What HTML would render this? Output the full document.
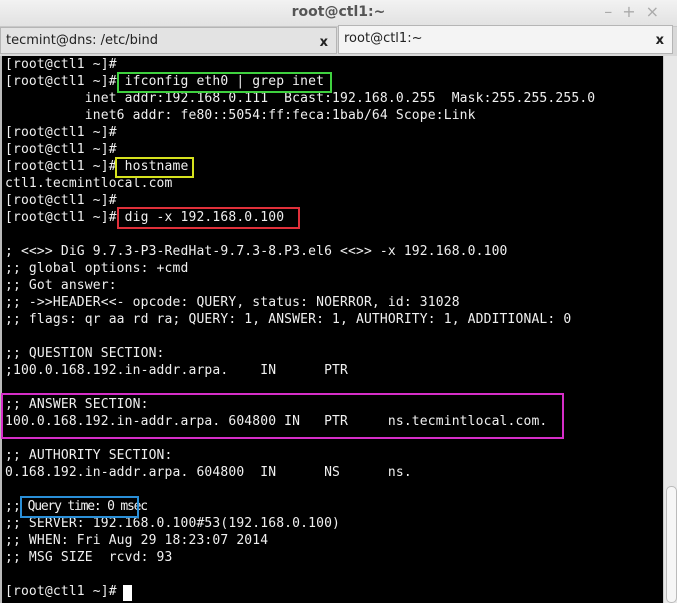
<!DOCTYPE html>
<html><head><style>
body{margin:0;width:677px;height:603px;overflow:hidden;background:#000;font-family:"Liberation Sans",sans-serif;position:relative}
#title{position:absolute;left:0;top:0;width:677px;height:26px;background:linear-gradient(#f2f2f2,#e2e2e2);border-bottom:1px solid #c8c8c8;text-align:center;font:bold 14px "DejaVu Sans",sans-serif;color:#555;line-height:24px}
#ctl{position:absolute;right:8px;top:0;font:16px "DejaVu Sans",sans-serif;color:#aaa;letter-spacing:10px;line-height:24px}
#tabs{position:absolute;left:0;top:27px;width:677px;height:29px;background:#d8d8d8}
.tab{position:absolute;top:0;height:27px;font:13px "DejaVu Sans",sans-serif;color:#222;line-height:26px;border:1px solid #b5b5b5;box-sizing:border-box}
.tab b{position:absolute;right:8px;top:2px;font:bold 13px "DejaVu Sans",sans-serif;line-height:26px}
#term{position:absolute;left:0;top:56px;width:663px;height:547px;background:#000;border-left:2px solid #bbb;box-sizing:border-box}
pre{margin:0;position:absolute;left:3px;top:0px;font:13px/17px "DejaVu Sans Mono",monospace;color:#f0f0f0;letter-spacing:0.15px}
#sb{position:absolute;left:663px;top:56px;width:14px;height:547px;background:#e8e8e8;border-left:1px solid #ccc}
#thumb{position:absolute;left:2px;top:430px;width:9px;height:115px;background:#f6f6f6;border:1px solid #bbb;border-radius:5px}
.bx{position:absolute;border:2px solid;box-sizing:border-box}
#cur{position:absolute;left:123px;top:585px;width:9px;height:16px;background:#fff}
</style></head><body>
<div id="title">root@ctl1:~<span id="ctl">–+×</span></div>
<div id="tabs">
<div class="tab" style="left:0;width:337px;background:#e3e3e3;padding-left:5px">tecmint@dns: /etc/bind<b>x</b></div>
<div class="tab" style="left:338px;width:335px;background:#f4f4f4;padding-left:5px;height:29px;top:-2px;line-height:26px">root@ctl1:~<b>x</b></div>
</div>
<div id="term"><pre>[root@ctl1 ~]#
[root@ctl1 ~]# ifconfig eth0 | grep inet
          inet addr:192.168.0.111  Bcast:192.168.0.255  Mask:255.255.255.0
          inet6 addr: fe80::5054:ff:feca:1bab/64 Scope:Link
[root@ctl1 ~]#
[root@ctl1 ~]#
[root@ctl1 ~]# hostname
ctl1.tecmintlocal.com
[root@ctl1 ~]#
[root@ctl1 ~]# dig -x 192.168.0.100

; &lt;&lt;&gt;&gt; DiG 9.7.3-P3-RedHat-9.7.3-8.P3.el6 &lt;&lt;&gt;&gt; -x 192.168.0.100
;; global options: +cmd
;; Got answer:
;; -&gt;&gt;HEADER&lt;&lt;- opcode: QUERY, status: NOERROR, id: 31028
;; flags: qr aa rd ra; QUERY: 1, ANSWER: 1, AUTHORITY: 1, ADDITIONAL: 0

;; QUESTION SECTION:
;100.0.168.192.in-addr.arpa.    IN      PTR

;; ANSWER SECTION:
100.0.168.192.in-addr.arpa. 604800 IN   PTR     ns.tecmintlocal.com.

;; AUTHORITY SECTION:
0.168.192.in-addr.arpa. 604800  IN      NS      ns.

;;<span style="letter-spacing:-1.2px"> Query time: 0 msec</span>
;; SERVER: 192.168.0.100#53(192.168.0.100)
;; WHEN: Fri Aug 29 18:23:07 2014
;; MSG SIZE  rcvd: 93

[root@ctl1 ~]# </pre></div>
<div id="cur"></div>
<div id="sb"><div id="thumb"></div></div>
<div class="bx" style="border-color:#3fd13f;left:117px;top:72px;width:215px;height:21px"></div>
<div class="bx" style="border-color:#d6e21e;left:115px;top:157px;width:79px;height:21px"></div>
<div class="bx" style="border-color:#e0303a;left:117px;top:207px;width:183px;height:22px"></div>
<div class="bx" style="border-color:#d62ec8;left:1px;top:393px;width:563px;height:46px"></div>
<div class="bx" style="border-color:#2a8fd8;left:20px;top:496px;width:119px;height:22px"></div>
</body></html>
